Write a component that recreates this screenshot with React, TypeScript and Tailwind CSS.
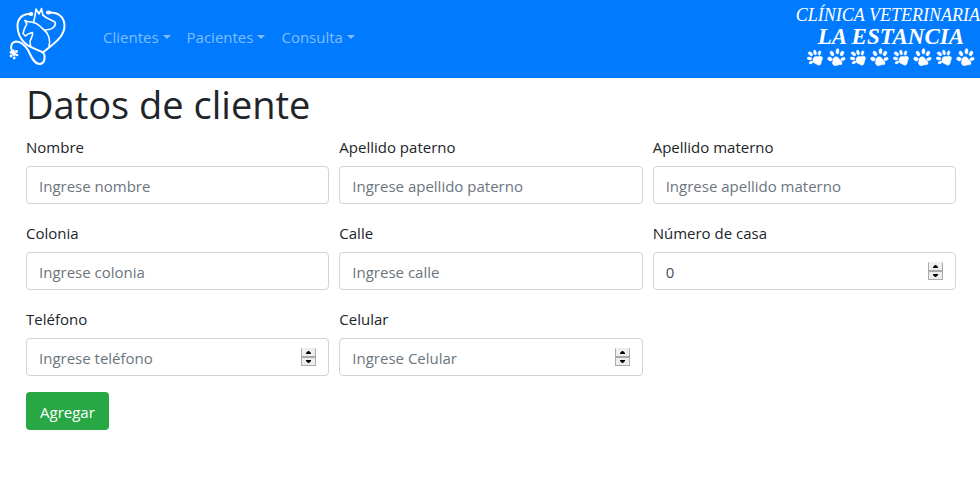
import { useRef } from "react";

type FieldProps = {
  id: string;
  label: string;
  placeholder?: string;
  type?: "text" | "number";
  defaultValue?: string;
};

const menus = ["Clientes", "Pacientes", "Consulta"];

const fields: FieldProps[] = [
  { id: "nombre", label: "Nombre", placeholder: "Ingrese nombre" },
  { id: "paterno", label: "Apellido paterno", placeholder: "Ingrese apellido paterno" },
  { id: "materno", label: "Apellido materno", placeholder: "Ingrese apellido materno" },
  { id: "colonia", label: "Colonia", placeholder: "Ingrese colonia" },
  { id: "calle", label: "Calle", placeholder: "Ingrese calle" },
  { id: "numero", label: "Número de casa", type: "number", defaultValue: "0" },
  { id: "telefono", label: "Teléfono", placeholder: "Ingrese teléfono", type: "number" },
  { id: "celular", label: "Celular", placeholder: "Ingrese Celular", type: "number" },
];

function Logo() {
  return (
    <svg width="60" height="64" viewBox="8 4 60 64" fill="none" stroke="white" strokeWidth="1.7" strokeLinecap="round" strokeLinejoin="round" aria-hidden="true">
      {/* stethoscope */}
      <path d="M30 14C22 13.500 17.500 19 17.500 26C17.500 33 20 39 26 44C31 48 38 50 42 52C46 54 45.500 64 39.500 64C34 64 31 56 28 50C24 44 20 41.500 16 41.500C11.500 42 10 46 12 51" strokeWidth="2" />
      <path d="M49 12.500C58 12 64 17 64.500 25C65 36 55 43 43.500 52" strokeWidth="2" />
      <ellipse cx="31" cy="14" rx="1.500" ry="1.200" fill="white" />
      <ellipse cx="48.500" cy="12.500" rx="1.800" ry="1.200" fill="white" />
      {/* dog */}
      <path d="M33.500 22.500L35.200 15L36 9L39 14L41.500 8.500L42.800 15L46 17.500L55 22C56.500 25 53 29 49 29.500L44.500 30" strokeWidth="1.600" />
      {/* horse and chest */}
      <path d="M25 20.500L28 21.800C34 21.500 39 24.500 43 29C48.500 33 51 40 48.800 47.500" strokeWidth="1.600" />
      <path d="M25 20.500L26.800 24L24.500 28.500L23 33.500L25.500 36L28 34L32.500 32.500C33.500 36 30.500 39 30 41.500L30.500 46" strokeWidth="1.600" />
      {/* paw at the end of the tube */}
      <g fill="white" stroke="none">
        <path d="M11.500 52C13.500 50.500 17 52 16 54.500C15 57 11.500 56.500 11.500 52Z" />
        <circle cx="11.200" cy="52.200" r="1.500" />
        <circle cx="13.500" cy="50.800" r="1.400" />
        <circle cx="16.500" cy="51.500" r="1.400" />
        <circle cx="17" cy="55" r="1.300" />
        <circle cx="11" cy="56" r="1.400" />
        <circle cx="14.200" cy="58" r="1.400" />
      </g>
    </svg>
  );
}

function PawPair() {
  return (
    <svg width="39" height="18" viewBox="0 0 39 18" fill="white" stroke="white" strokeWidth="0.4" aria-hidden="true">
      <path d="M6.500 10C8 7.500 10 9 12 8.500C15 7.500 16.500 10 15 12C14 14 14.500 16 13 17C11 18 10 16 8 15.500C5.500 14.500 5.500 12 6.500 10Z" />
      <ellipse cx="2.500" cy="10.500" rx="2.400" ry="1.400" transform="rotate(10 2.500 10.500)" />
      <ellipse cx="3.500" cy="5.800" rx="2.600" ry="1.600" transform="rotate(35 3.500 5.800)" />
      <ellipse cx="8" cy="4.500" rx="1.400" ry="2.500" transform="rotate(-15 8 4.500)" />
      <ellipse cx="12.500" cy="5" rx="1.300" ry="2.300" transform="rotate(15 12.500 5)" />
      <ellipse cx="4" cy="14.500" rx="2" ry="1.200" transform="rotate(-20 4 14.500)" />
      <path d="M28 9C30 8 31.500 9.500 32.300 11C33 12.500 35.500 13 35 15.500C34.500 17.500 32.500 16.500 31 17C29 17.500 27.500 18.500 26 16.500C24.500 14.500 26 13.500 26 12C26 10.500 26.500 9.500 28 9Z" />
      <ellipse cx="23" cy="11" rx="2.500" ry="1.800" transform="rotate(25 23 11)" />
      <ellipse cx="25" cy="5.500" rx="1.700" ry="2.600" transform="rotate(-30 25 5.500)" />
      <ellipse cx="30.500" cy="3.300" rx="1.600" ry="2.800" transform="rotate(5 30.500 3.300)" />
      <ellipse cx="35" cy="5.500" rx="1.700" ry="2.500" transform="rotate(30 35 5.500)" />
      <ellipse cx="36" cy="11" rx="2.400" ry="1.500" transform="rotate(-20 36 11)" />
    </svg>
  );
}

function Brand() {
  return (
    <div className="flex shrink-0 flex-col pt-1 font-['Liberation_Serif',serif] whitespace-nowrap text-white italic">
      <span className="text-[18px] leading-[22px]">CLÍNICA VETERINARIA</span>
      <div className="flex flex-col items-center pl-[6px]">
        <span className="text-[23px] leading-[22px] font-bold">LA ESTANCIA</span>
        <div className="flex gap-1">
          <PawPair />
          <PawPair />
          <PawPair />
          <PawPair />
        </div>
      </div>
    </div>
  );
}

function Field({ id, label, placeholder, type = "text", defaultValue }: FieldProps) {
  const input = useRef<HTMLInputElement>(null);
  const numeric = type === "number";
  return (
    <div>
      <label htmlFor={id} className="mb-[7px] block pt-px">{label}</label>
      <div className="relative">
        <input
          ref={input}
          id={id}
          type={type}
          placeholder={placeholder}
          defaultValue={defaultValue}
          className="block h-[38px] w-full appearance-none rounded border border-[#ced4da] bg-white px-3 pt-[7px] pb-[5px] text-[#495057] [-moz-appearance:textfield] placeholder:text-[#6c757d] [&::-webkit-inner-spin-button]:appearance-none"
        />
        {numeric && (
          <div className="absolute inset-y-0 right-[13px] flex flex-col justify-center">
            <button type="button" aria-label={`Aumentar ${label}`} onClick={() => input.current?.stepUp()} className="flex h-[9px] w-[15px] items-center justify-center border border-t-[#eeeeee] border-r-[#aaaaaa] border-b-[#aaaaaa] border-l-[#aaaaaa] bg-[#eeeeee]">
              <svg width="5" height="3" viewBox="0 0 5 3" aria-hidden="true"><path d="M0 3V2L2 0H3L5 2V3Z" /></svg>
            </button>
            <button type="button" aria-label={`Disminuir ${label}`} onClick={() => input.current?.stepDown()} className="flex h-[9px] w-[15px] items-center justify-center border border-[#aaaaaa] bg-[#eeeeee]">
              <svg width="5" height="3" viewBox="0 0 5 3" aria-hidden="true"><path d="M0 0V1L2 3H3L5 1V0Z" /></svg>
            </button>
          </div>
        )}
      </div>
    </div>
  );
}

export default function App() {
  return (
    <div className="overflow-x-hidden bg-white font-['Open_Sans',sans-serif] text-[15px] leading-6 text-[#212529]">
      <nav className="flex h-[78px] items-start justify-between bg-[#007bff] pl-2">
        <div className="flex">
          <a href="#" aria-label="Inicio" className="mr-[27px] pt-1"><Logo /></a>
          <ul className="flex pt-[25px]">
            {menus.map((menu) => (
              <li key={menu}>
                <button type="button" className="flex items-center gap-1 px-2 text-[#80bdff]">
                  {menu}
                  <span className="border-x-4 border-t-4 border-x-transparent border-t-current" />
                </button>
              </li>
            ))}
          </ul>
        </div>
        <Brand />
      </nav>
      <main className="pr-6 pl-[26px]">
        <h1 className="mb-[6px] pt-[2px] text-[38px] leading-[48px]">Datos de cliente</h1>
        <form onSubmit={(event) => event.preventDefault()}>
          <div className="grid grid-cols-3 gap-x-[10px] gap-y-4">
            {fields.map((field) => <Field key={field.id} {...field} />)}
          </div>
          <button type="submit" className="mt-4 h-[38px] rounded bg-[#28a745] px-[14px] pt-[2px] text-white">Agregar</button>
        </form>
      </main>
    </div>
  );
}
